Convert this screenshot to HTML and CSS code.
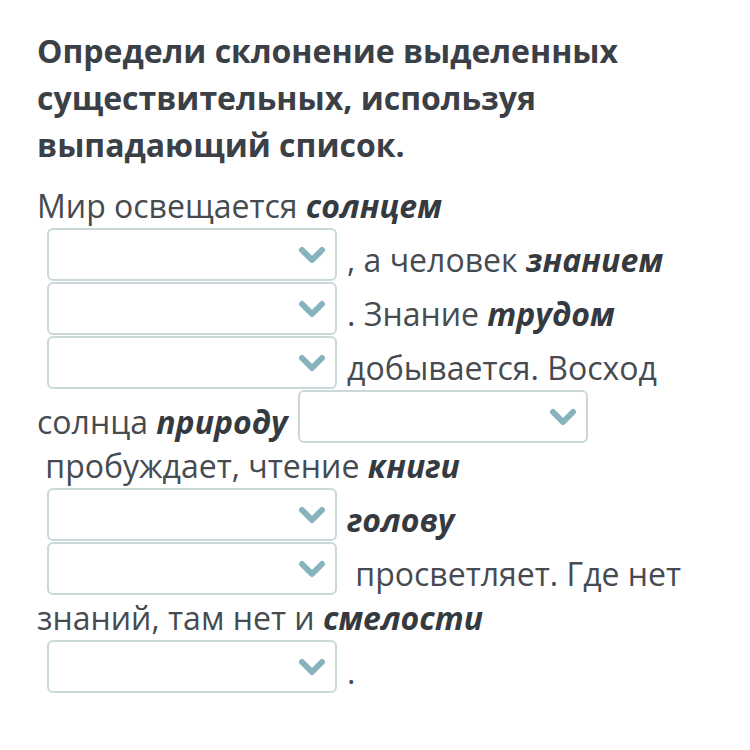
FILE: index.html
```html
<!DOCTYPE html>
<html lang="ru">
<head>
<meta charset="utf-8">
<link rel="stylesheet" href="styles.css">
</head>
<body>
<div class="card">
  <h1 class="title">Определи склонение выделенных существительных, используя выпадающий список.</h1>
  <p class="text">Мир освещается <b>солнцем</b> <span class="sel"><svg class="chev" viewBox="0 0 30 20"><path d="M5 4 L15 14 L25 4"/></svg></span>, а человек <b>знанием</b> <span class="sel"><svg class="chev" viewBox="0 0 30 20"><path d="M5 4 L15 14 L25 4"/></svg></span>. Знание <b>трудом</b> <span class="sel"><svg class="chev" viewBox="0 0 30 20"><path d="M5 4 L15 14 L25 4"/></svg></span>добывается. Восход солнца <b>природу</b><span class="sel"><svg class="chev" viewBox="0 0 30 20"><path d="M5 4 L15 14 L25 4"/></svg></span>&nbsp;пробуждает, чтение <b>книги</b> <span class="sel"><svg class="chev" viewBox="0 0 30 20"><path d="M5 4 L15 14 L25 4"/></svg></span><b>голову</b> <span class="sel"><svg class="chev" viewBox="0 0 30 20"><path d="M5 4 L15 14 L25 4"/></svg></span>&nbsp;просветляет. Где нет знаний, там нет и <b>смелости</b> <span class="sel"><svg class="chev" viewBox="0 0 30 20"><path d="M5 4 L15 14 L25 4"/></svg></span>.</p>
</div>
</body>
</html>
```

FILE: styles.css
```css
html, body {
  margin: 0;
  padding: 0;
  background: #ffffff;
}
.card {
  padding: 27px 37px 0 37px;
  font-family: "Open Sans", sans-serif;
}
.title {
  margin: 0;
  font-size: 32px;
  font-weight: 700;
  line-height: 47px;
  color: #3b4047;
}
.text {
  margin: 16px 0 0 0;
  font-size: 32px;
  line-height: 44px;
  color: #464b51;
  width: 676px;
}
.text b {
  font-weight: 700;
  font-style: italic;
  color: #353a40;
}
.sel {
  display: inline-block;
  box-sizing: border-box;
  width: 290px;
  height: 53px;
  margin: 0 10px 1px 10px;
  border: 2px solid #cbd8da;
  border-radius: 6px;
  background: #ffffff;
  vertical-align: -10px;
  position: relative;
}
.chev {
  position: absolute;
  right: 8px;
  top: 16px;
  width: 30px;
  height: 20px;
  fill: none;
  stroke: #86b3bc;
  stroke-width: 6;
  stroke-linecap: round;
  stroke-linejoin: round;
}
```
